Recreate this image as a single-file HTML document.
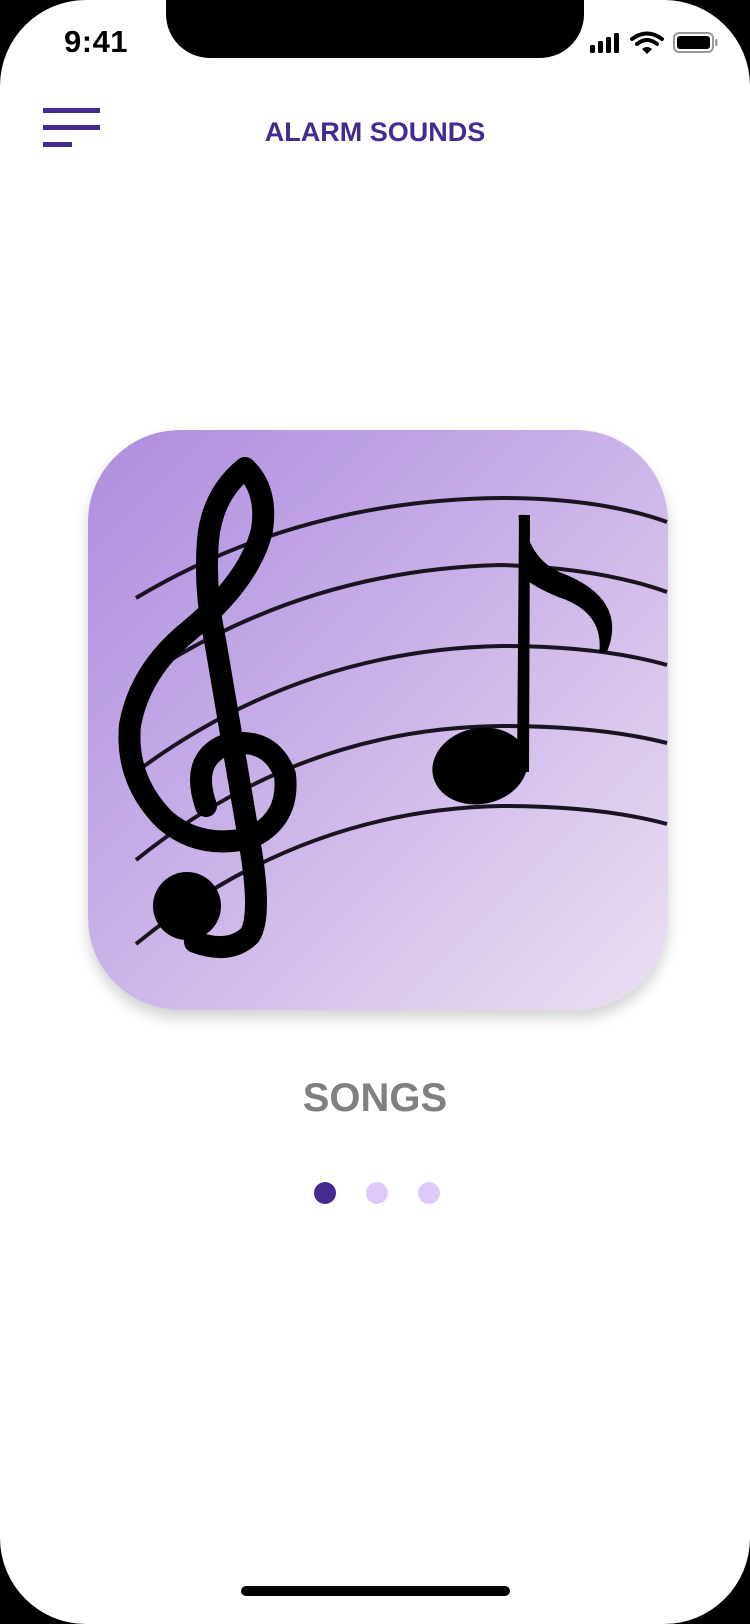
<!DOCTYPE html>
<html><head><meta charset="utf-8"><style>
html,body{margin:0;padding:0;background:#000;width:750px;height:1624px;overflow:hidden;font-family:"Liberation Sans",sans-serif}
.screen{position:absolute;left:0;top:0;width:750px;height:1624px;background:#fff;border-radius:86px;overflow:hidden}
.notch{position:absolute;left:166px;top:-2px;width:418px;height:60px;background:#000;border-radius:0 0 44px 44px}
.time{position:absolute;left:64px;top:24px;font-size:31px;font-weight:bold;color:#000;letter-spacing:0.5px}
.bar{position:absolute;left:43px;height:5px;background:#452a91}
.title{position:absolute;left:0;width:750px;top:117px;text-align:center;font-size:27px;font-weight:bold;color:#452a91}
.card{position:absolute;left:88px;top:430px;width:580px;height:580px;border-radius:92px;overflow:hidden;background:linear-gradient(135deg,#ad8ddf 0%,#c9b0e8 45%,#ebe0f2 100%);box-shadow:0 8px 14px rgba(0,0,0,0.18)}
.songs{position:absolute;left:0;width:750px;top:1076px;text-align:center;font-size:40px;font-weight:bold;color:#808080}
.dot{position:absolute;top:1182px;width:22px;height:22px;border-radius:50%}
.home{position:absolute;left:241px;top:1586px;width:269px;height:10px;border-radius:5px;background:#000}
</style></head><body>
<div class="screen">
<div class="notch"></div>
<div class="time">9:41</div>
<svg style="position:absolute;left:585px;top:30px" width="140" height="28" viewBox="0 0 140 28">
<rect x="5" y="15" width="5" height="8" rx="1.5" fill="#000"/>
<rect x="13" y="11" width="5" height="12" rx="1.5" fill="#000"/>
<rect x="21" y="7" width="5" height="16" rx="1.5" fill="#000"/>
<rect x="29" y="3" width="5" height="20" rx="1.5" fill="#000"/>
<path d="M47 9 Q62 -2 77 9" stroke="#000" stroke-width="4" fill="none" stroke-linecap="round"/>
<path d="M52 14 Q62 6 72 14" stroke="#000" stroke-width="4" fill="none" stroke-linecap="round"/>
<path d="M57 19 Q62 15 67 19 L62 24 Z" fill="#000"/>
<rect x="89" y="3" width="39" height="19" rx="5" fill="none" stroke="#999" stroke-width="2"/>
<rect x="92" y="6" width="33" height="13" rx="3" fill="#000"/>
<rect x="130" y="9" width="2.5" height="7" rx="1" fill="#999"/>
</svg>
<div class="bar" style="top:108px;width:57px"></div>
<div class="bar" style="top:125px;width:57px"></div>
<div class="bar" style="top:142px;width:29px"></div>
<div class="title">ALARM SOUNDS</div>
<div class="card"></div>
<svg style="position:absolute;left:0;top:0" width="750" height="1624" viewBox="0 0 750 1624">
<g stroke="#1a1420" stroke-width="4" fill="none">
<path d="M136 598 Q300 500 501 498 Q600 498 667 522"/>
<path d="M136 682 Q300 570 501 565 Q600 568 667 592"/>
<path d="M136 772 Q300 650 501 646 Q600 646 667 665"/>
<path d="M136 860 Q300 728 501 726 Q600 726 667 743"/>
<path d="M136 944 Q300 810 501 806 Q600 806 667 824"/>
</g>
<g fill="#000" stroke="#000">
<ellipse cx="480" cy="766" rx="48" ry="38" transform="rotate(-12 480 766)" stroke="none"/>
<path d="M519 515 L530 515 L529 772 L517 772 Z" stroke="none"/>
<path d="M521 515 Q525 560 560 575 Q625 600 605 650 L602 650 Q605 610 560 595 Q535 585 525 575 Z" stroke-width="5"/>
<path d="M206 806 Q190 760 225 745 Q270 735 285 775 Q290 820 250 838 Q200 850 165 820 Q125 780 130 725 Q140 670 190 630 Q250 580 262 530 Q268 490 245 468 Q212 495 208 540 Q204 590 215 640 L250 845 Q262 915 250 935 Q230 955 195 942" stroke-width="22" fill="none" stroke-linecap="round" stroke-linejoin="round"/>
<circle cx="187" cy="906" r="34" stroke="none"/>
</g>
</svg>
<div class="songs">SONGS</div>
<div class="dot" style="left:314px;background:#452a91"></div>
<div class="dot" style="left:366px;background:#dfc8fb"></div>
<div class="dot" style="left:418px;background:#dfc8fb"></div>
<div class="home"></div>
</div>
</body></html>
